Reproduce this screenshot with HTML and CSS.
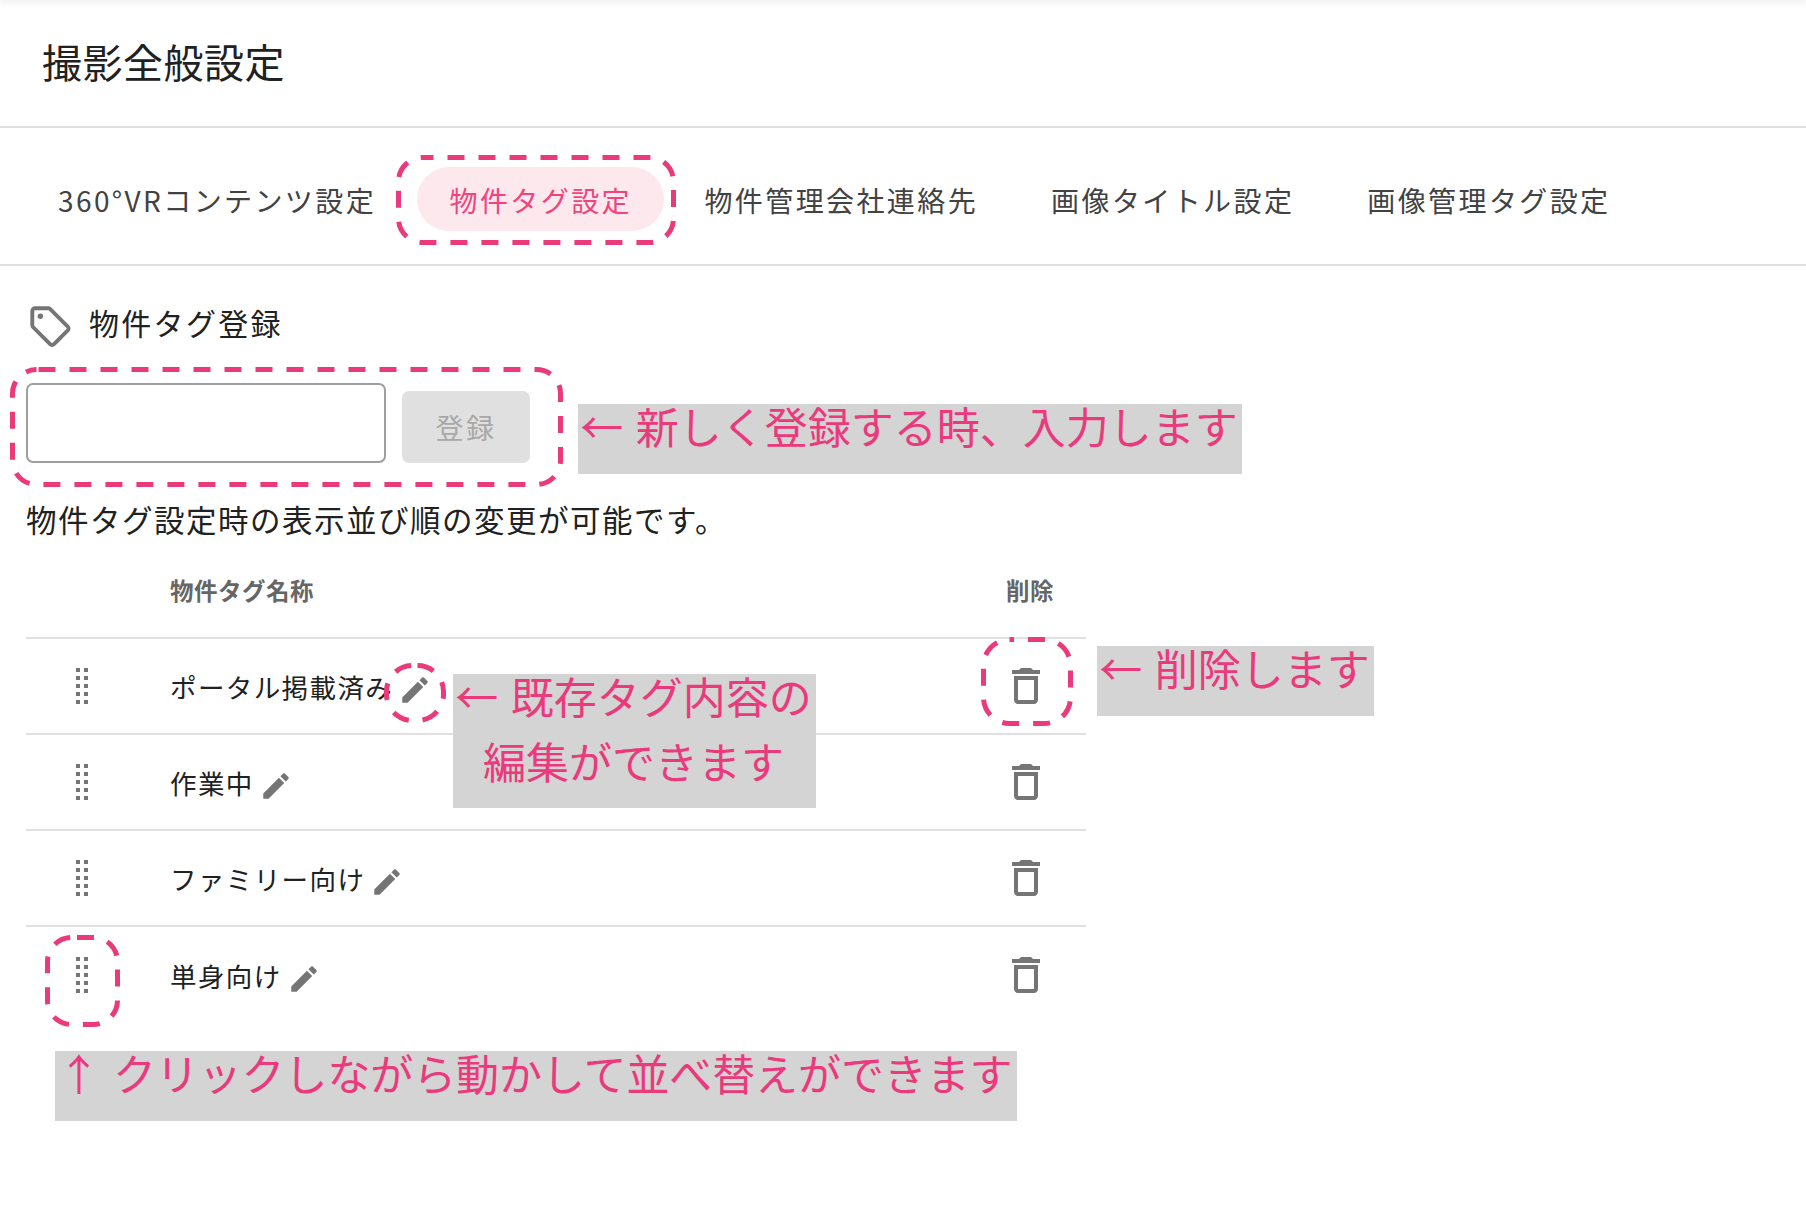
FILE: index.html
```html
<!DOCTYPE html>
<html lang="ja">
<head>
<meta charset="utf-8">
<title>撮影全般設定</title>
<link rel="stylesheet" href="styles.css">
</head>
<body>
<svg class="defs" width="0" height="0" aria-hidden="true">
  <symbol id="i-edit" viewBox="0 0 24 24"><path d="M3 17.25V21h3.75L17.81 9.94l-3.75-3.75L3 17.25zM20.71 7.04c.39-.39.39-1.02 0-1.41l-2.34-2.34c-.39-.39-1.02-.39-1.41 0l-1.83 1.83 3.75 3.75 1.83-1.83z"/></symbol>
  <symbol id="i-trash" viewBox="0 0 24 24"><path d="M6 19c0 1.1.9 2 2 2h8c1.1 0 2-.9 2-2V7H6v12zM8 9h8v10H8V9zm7.5-5l-1-1h-5l-1 1H5v2h14V4z"/></symbol>
  <symbol id="i-drag" viewBox="0 0 12 36"><path d="M0 0h4v4H0zM8 0h4v4H8zM0 8h4v4H0zM8 8h4v4H8zM0 16h4v4H0zM8 16h4v4H8zM0 24h4v4H0zM8 24h4v4H8zM0 32h4v4H0zM8 32h4v4H8z"/></symbol>
</svg>
<div class="top-shadow"></div>
<header class="page-head"><h1 class="page-title">撮影全般設定</h1></header>
<nav class="tabs">
  <a class="tab">360°VRコンテンツ設定</a>
  <a class="tab tab-active">物件タグ設定</a>
  <a class="tab">物件管理会社連絡先</a>
  <a class="tab">画像タイトル設定</a>
  <a class="tab">画像管理タグ設定</a>
</nav>
<main class="content">
  <h2 class="section-title">
    <svg class="tag-icon" viewBox="0 0 40 40"><path d="M4 5.500C4 4.100 5.100 3 6.500 3H18.800c.7 0 1.400.3 1.900.8L37 20.100c1 1 1 2.600 0 3.600L24.200 36.500c-1 1-2.600 1-3.600 0L4.800 20.700C4.300 20.200 4 19.500 4 18.800z" fill="none" stroke="#757575" stroke-width="3.600" stroke-linejoin="round"/><circle cx="11.500" cy="10.500" r="2.500" fill="#757575"/></svg>
    物件タグ登録
  </h2>
  <form class="tag-form">
    <input class="tag-input" type="text">
    <button class="tag-submit" type="button">登録</button>
  </form>
  <p class="hint">物件タグ設定時の表示並び順の変更が可能です。</p>
  <div class="tag-table">
    <div class="row row-head"><span></span><span class="th">物件タグ名称</span><span class="th th-del">削除</span></div>
    <div class="row">
      <svg class="drag"><use href="#i-drag"/></svg>
      <span class="name">ポータル掲載済み<svg class="edit"><use href="#i-edit"/></svg></span>
      <svg class="trash"><use href="#i-trash"/></svg>
    </div>
    <div class="row">
      <svg class="drag"><use href="#i-drag"/></svg>
      <span class="name">作業中<svg class="edit"><use href="#i-edit"/></svg></span>
      <svg class="trash"><use href="#i-trash"/></svg>
    </div>
    <div class="row">
      <svg class="drag"><use href="#i-drag"/></svg>
      <span class="name">ファミリー向け<svg class="edit"><use href="#i-edit"/></svg></span>
      <svg class="trash"><use href="#i-trash"/></svg>
    </div>
    <div class="row row-last">
      <svg class="drag"><use href="#i-drag"/></svg>
      <span class="name">単身向け<svg class="edit"><use href="#i-edit"/></svg></span>
      <svg class="trash"><use href="#i-trash"/></svg>
    </div>
  </div>
</main>

<svg class="mark mark-tab" viewBox="0 0 280 90"><rect x="2.500" y="2.500" width="275" height="85" rx="24"/></svg>
<svg class="mark mark-form" viewBox="0 0 553 120"><rect x="2.500" y="2.500" width="548" height="115" rx="24"/></svg>
<svg class="mark mark-edit" viewBox="0 0 62 60"><rect x="2.500" y="2.500" width="57" height="55" rx="26"/></svg>
<svg class="mark mark-trash" viewBox="0 0 92 89"><rect x="2.500" y="2.500" width="87" height="84" rx="26"/></svg>
<svg class="mark mark-drag" viewBox="0 0 75 92"><rect x="2.500" y="2.500" width="70" height="87" rx="24"/></svg>

<div class="note note-form"><span class="note-text">← 新しく登録する時、入力します</span></div>
<div class="note note-edit"><span class="note-text">← 既存タグ内容の<br>編集ができます</span></div>
<div class="note note-trash"><span class="note-text">← 削除します</span></div>
<div class="note note-drag"><span class="note-text">↑ クリックしながら動かして並べ替えができます</span></div>
</body>
</html>
```
FILE: styles.css
```css
* { box-sizing: border-box; }
html, body { margin: 0; padding: 0; background: #fff; }
body {
  position: relative;
  height: 1218px;
  overflow: hidden;
  color: #212121;
  font-family: "Noto Sans CJK JP", "Noto Sans", sans-serif;
}
.defs { position: absolute; }
.top-shadow { height: 0; box-shadow: 0 0 7px 1px rgba(0,0,0,.2); }

.page-head { height: 128px; padding: 0 42px 4px; display: flex; align-items: center; border-bottom: 2px solid #e0e0e0; }
.page-title { margin: 0; font-size: 40px; font-weight: 400; letter-spacing: .5px; line-height: 1; }

.tabs { display: flex; gap: 7px; height: 138px; padding: 39px 0 0 25px; border-bottom: 2px solid #e0e0e0; }
.tab {
  height: 64px; padding: 2px 33px 0; border-radius: 32px;
  display: flex; align-items: center;
  font-size: 28px; letter-spacing: 2.400px; color: #424242; white-space: nowrap;
}
.tab:first-child { margin-right: 1px; }
.tab-active { padding: 2px 32.500px 0; background: #fde8ee; color: #f0447c; }

.content { padding: 0 26px; }
.section-title { display: flex; align-items: center; gap: 18px; margin: 34px 0 0 2px; height: 44px; font-size: 30px; font-weight: 400; letter-spacing: 2.300px; }
.tag-icon { width: 43px; height: 43px; margin-top: 8px; }
.tag-form { display: flex; align-items: flex-end; gap: 16px; margin-top: 39px; }
.tag-input { width: 360px; height: 80px; border: 2px solid #9e9e9e; border-radius: 7px; background: #fff; }
.tag-submit { width: 128px; height: 72px; border: 0; border-radius: 7px; background: #e0e0e0; color: #a8a8a8; font: inherit; font-size: 28px; letter-spacing: 2.400px; padding: 0; }
.hint { margin: 35px 0 0; font-size: 30.500px; line-height: 42px; letter-spacing: 1.500px; }

.tag-table { width: 1060px; margin-top: 6px; }
.row { display: grid; grid-template-columns: 144px 1fr 96px; align-items: center; height: 96px; border-bottom: 2px solid #e0e0e0; }
.row-head { height: 93px; padding-bottom: 3px; }
.row-last { border-bottom: 0; }
.th { font-size: 23.500px; font-weight: 700; color: #666; letter-spacing: .5px; }
.th-del { justify-self: start; margin-left: 16px; }
.drag { width: 12px; height: 36px; margin-left: 50px; fill: #757575; }
.name { display: flex; align-items: center; font-size: 26.500px; letter-spacing: 1.400px; }
.edit { width: 34px; height: 34px; margin: 8px 0 0 5px; fill: #757575; }
.trash { width: 48px; height: 48px; margin-left: 12px; fill: #757575; }

.mark { position: absolute; fill: none; stroke: #ea3a7c; stroke-width: 5; stroke-dasharray: 17 14; }
.mark-tab { left: 396px; top: 155px; width: 280px; height: 90px; stroke-dashoffset: 6; }
.mark-form { left: 10px; top: 367px; width: 553px; height: 120px; stroke-dashoffset: 29; }
.mark-edit { left: 384px; top: 663px; width: 62px; height: 60px; stroke-dashoffset: 26; }
.mark-trash { left: 981px; top: 637px; width: 92px; height: 89px; stroke-dashoffset: 12.500; }
.mark-drag { left: 45px; top: 935px; width: 75px; height: 92px; stroke-dashoffset: 25.500; }

.note { position: absolute; padding-right: 2px; background: #d4d4d4; color: #ea3a7c; font-size: 43px; line-height: 65px; white-space: nowrap; text-align: center; word-spacing: 3px; }
.note-text { position: relative; top: -11px; }
.note-form { left: 578px; top: 404px; width: 664px; height: 70px; }
.note-edit { left: 453px; top: 674px; width: 363px; height: 134px; }
.note-trash { left: 1097px; top: 646px; width: 277px; height: 70px; }
.note-drag { left: 55px; top: 1051px; width: 962px; height: 70px; letter-spacing: -.1px; }
```
